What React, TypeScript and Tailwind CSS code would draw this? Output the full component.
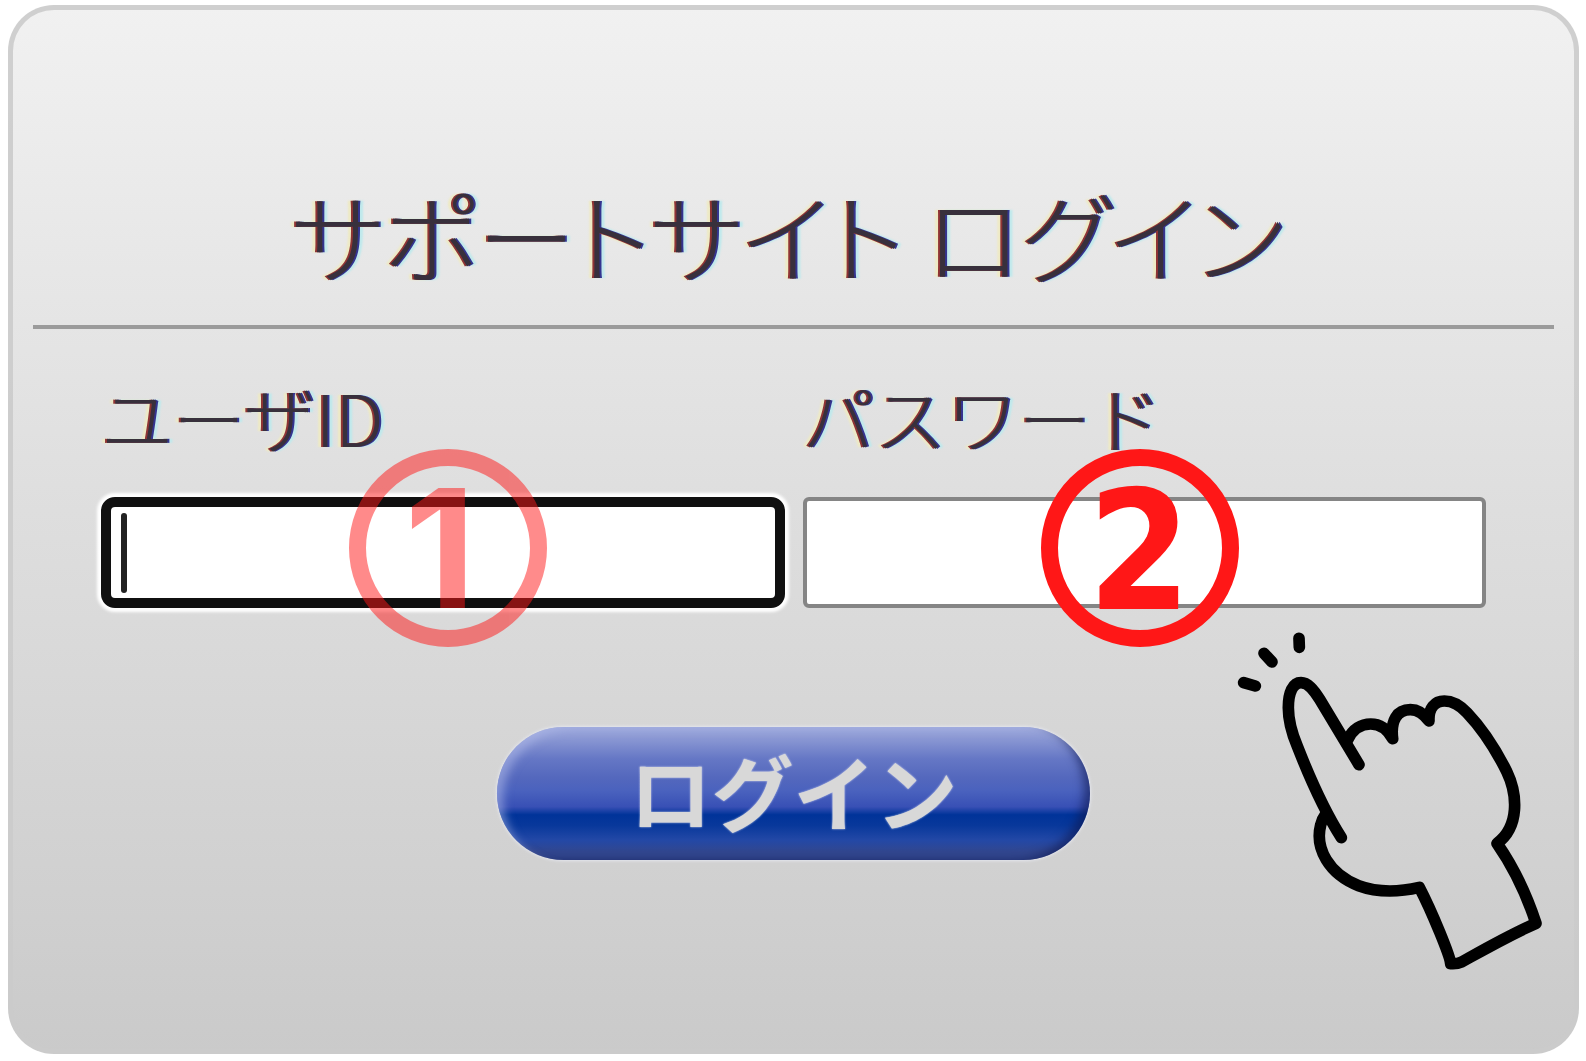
import { useState } from "react";
import type { ReactNode } from "react";
import clsx from "clsx";

const kanaText = "font-light text-[#38303c] [text-shadow:-2px_0_#8f3434,2px_0_#34348f,-5px_0_2px_#eeeac4,5px_0_2px_#bfe9ec]";

function StepBadge({ step, className }: { step: number; className: string }) {
  return (
    <span
      aria-hidden="true"
      className={clsx(
        "pointer-events-none absolute -top-12 flex size-[198px] items-center justify-center rounded-full border-[17px] border-[#ff1717] text-[165px] leading-none font-bold text-[#ff1717]",
        className
      )}
    >
      {step}
    </span>
  );
}

function Field({ id, label, children }: { id: string; label: string; children: ReactNode }) {
  return (
    <div>
      <label htmlFor={id} className={clsx("block text-[72px] leading-[80px]", kanaText)}>
        {label}
      </label>
      <div className="relative mt-[41px]">{children}</div>
    </div>
  );
}

function PointingHand() {
  return (
    <svg
      viewBox="30 50 960 1050"
      className="pointer-events-none absolute right-6 bottom-[72px] h-[350px] w-[320px]"
      fill="none"
      stroke="#000"
      strokeWidth="35"
      strokeLinecap="round"
      strokeLinejoin="round"
      aria-hidden="true"
    >
      <path d="M237 84L238 111M132 129L156 155M71 217L106 227" />
      <path d="M417 463L299 267C280 236 263 217 243 217C219 217 205 246 205 292C205 329 217 372 232 408C270 505 315 605 364 682" />
      <path d="M383 388C398 356 424 341 452 341C478 341 502 356 518 385C511 331 531 298 571 298C591 298 610 308 627 332C625 294 644 272 673 272C699 272 722 287 741 307C786 354 831 425 860 483C893 552 899 649 831 699C879 768 920 853 948 939C866 975 795 1016 725 1055C714 1060 704 1061 692 1060C691 1038 635 902 598 831C529 847 470 846 416 826C327 791 284 714 302 644C305 631 309 623 315 615" />
    </svg>
  );
}

export default function App() {
  const [userId, setUserId] = useState("");
  const [password, setPassword] = useState("");

  return (
    <div className="bg-white pt-[5px] pr-[7px] pb-2 pl-2 font-['Noto_Sans_CJK_JP',sans-serif]">
      <main className="relative rounded-[46px] border-[5px] border-[#cbcbcb]/90 bg-linear-to-b from-[#f1f1f1] to-[#cacaca] bg-origin-border px-5 pt-[159px] pb-[189px]">
        <h1 className={clsx("pr-3 text-center text-[98px] leading-[128px] [font-feature-settings:'palt']", kanaText)}>
          サポートサイト ログイン
        </h1>
        <hr className="mt-[28px] border-t-4 border-[#9b9b9b]" />

        <form onSubmit={(e) => e.preventDefault()} className="px-[68px] pt-[47px]">
          <div className="grid grid-cols-2 gap-[18px]">
            <Field id="user-id" label="ユーザID">
              <input
                id="user-id"
                type="text"
                value={userId}
                onChange={(e) => setUserId(e.target.value)}
                className="block h-[111px] w-full rounded-[14px] border-[10px] border-[#101010] bg-white px-4 text-[64px] shadow-[0_0_3px_4px_#fff] outline-none"
              />
              {userId === "" && (
                <span className="pointer-events-none absolute top-4 left-5 h-20 w-[6px] rounded-sm bg-[#222]" />
              )}
              <StepBadge step={1} className="left-[248px] pr-4 font-['Inter',sans-serif] opacity-50" />
            </Field>
            <Field id="password" label="パスワード">
              <input
                id="password"
                type="password"
                value={password}
                onChange={(e) => setPassword(e.target.value)}
                className="block h-[111px] w-full rounded-md border-4 border-[#858585] bg-white px-4 text-[64px] outline-none"
              />
              <StepBadge step={2} className="left-[238px] pt-2 font-['DejaVu_Sans_Condensed','DejaVu_Sans',sans-serif]" />
            </Field>
          </div>

          <button
            type="submit"
            className="mx-auto mt-[119px] block h-[133px] w-[593px] rounded-full bg-[linear-gradient(#9aa6db_0%,#8c99d4_8%,#6577c5_24%,#5468bd_38%,#4a62be_48%,#3850b5_60%,#003399_66%,#08389b_74%,#2348a6_85%,#32478f_94%,#32478f_100%)] pb-2 text-[82px] leading-[125px] font-bold text-[#d8d8d8] shadow-[0_0_3px_1px_#e4e6ee,inset_10px_6px_10px_-4px_rgba(180,190,235,0.55),inset_-10px_-4px_10px_-4px_rgba(15,25,80,0.6)] [text-shadow:0_0_2px_#e6e8f4]"
          >
            ログイン
          </button>
        </form>

        <PointingHand />
      </main>
    </div>
  );
}
